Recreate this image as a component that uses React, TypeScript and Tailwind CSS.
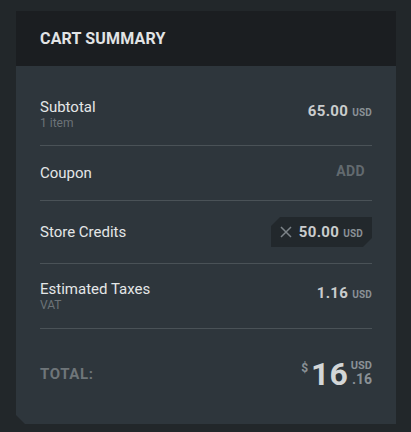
import React from "react";

const font = { fontFamily: '"Roboto", "Liberation Sans", sans-serif' };

function Usd({ className = "" }: { className?: string }) {
  return <span className={"text-[10px] font-bold tracking-[0.02em] text-[#8a9196] " + className}>USD</span>;
}

export default function App() {
  return (
    <div className="min-h-[432px] w-[411px] bg-[#22272a] pt-[11px] pl-4" style={font}>
      <div className="w-[380px] bg-[#2e363c] [clip-path:polygon(0_0,100%_0,100%_100%,9px_100%,0_calc(100%-9px))]">
        <div className="flex h-[55px] items-center bg-[#1b1e21] px-6">
          <h2 className="text-[16px] font-bold tracking-[0.01em] text-[#e2e4e5]">CART SUMMARY</h2>
        </div>
        <div className="px-6 pt-[22px]">
          <div className="flex items-start justify-between border-b border-[#4a5257] pt-[10px] pb-[14px]">
            <div className="flex flex-col">
              <span className="text-[15px] leading-[18px] text-[#e4e6e7]">Subtotal</span>
              <span className="text-[12px] leading-[15px] text-[#6c7378]">1 item</span>
            </div>
            <div className="flex items-baseline gap-[4px] pt-[2px]">
              <span className="text-[15px] font-bold tracking-[0.02em] text-[#c9cccd]">65.00</span>
              <Usd />
            </div>
          </div>
          <div className="flex h-[55px] items-center justify-between border-b border-[#4a5257]">
            <span className="text-[15px] text-[#e4e6e7]">Coupon</span>
            <span className="pr-[7px] pb-[4px] text-[14px] font-bold tracking-[0.03em] text-[#626a6f]">ADD</span>
          </div>
          <div className="flex h-[63px] items-center justify-between border-b border-[#4a5257]">
            <span className="text-[15px] text-[#e4e6e7]">Store Credits</span>
            <div className="flex h-[30px] w-[101px] items-center justify-end gap-[6px] bg-[#22282c] pr-[9px] [clip-path:polygon(9px_0,100%_0,100%_calc(100%-9px),calc(100%-9px)_100%,0_100%,0_9px)]">
              <svg width="12" height="12" viewBox="0 0 12 12" className="mr-[1px]">
                <path d="M1 1L11 11M11 1L1 11" stroke="#7c8388" strokeWidth="1.5" />
              </svg>
              <div className="flex items-baseline gap-[4px]">
                <span className="text-[15px] font-bold tracking-[0.02em] text-[#c9cccd]">50.00</span>
                <Usd />
              </div>
            </div>
          </div>
          <div className="flex h-[65px] items-start justify-between border-b border-[#4a5257] pt-[16px]">
            <div className="flex flex-col">
              <span className="text-[15px] leading-[18px] text-[#e4e6e7]">Estimated Taxes</span>
              <span className="text-[12px] leading-[15px] text-[#6c7378]">VAT</span>
            </div>
            <div className="flex items-baseline gap-[4px] pt-[2px]">
              <span className="text-[15px] font-bold tracking-[0.02em] text-[#c9cccd]">1.16</span>
              <Usd />
            </div>
          </div>
          <div className="flex items-center justify-between pt-[30px] pb-[35px]">
            <span className="text-[15px] font-bold tracking-[0.04em] text-[#6e7579]">TOTAL:</span>
            <div className="flex h-[30px] items-start">
              <span className="mt-[3px] mr-[3px] text-[12px] leading-[12px] font-bold text-[#8a9196]">$</span>
              <span className="text-[32px] leading-[30px] font-bold text-[#d3d6d7]">16</span>
              <div className="ml-[3px] flex flex-col items-end gap-[2px] pt-[1px]">
                <span className="text-[11px] leading-[11px] font-bold text-[#8a9196]">USD</span>
                <span className="text-[14px] leading-[13px] font-bold text-[#8a9196]">.16</span>
              </div>
            </div>
          </div>
        </div>
      </div>
    </div>
  );
}
